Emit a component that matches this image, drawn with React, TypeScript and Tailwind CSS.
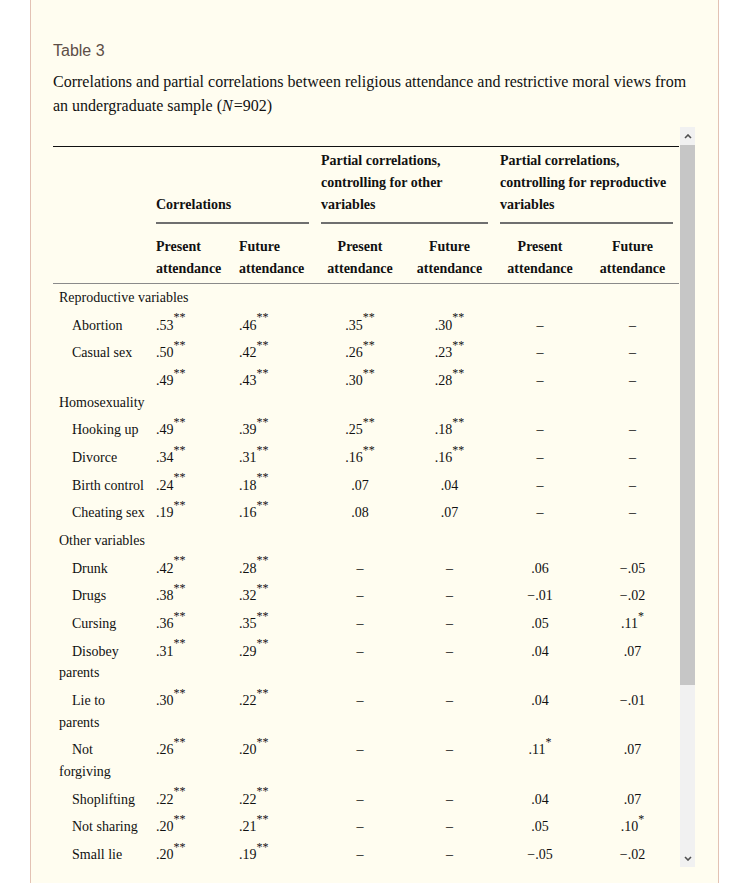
import React from 'react';

/* ────────────────── Data ────────────────── */

type Cell = { n: string; s?: string };
type Row =
  | { kind: 'cat'; label: string }
  | { kind: 'data'; lines: string[]; values: Cell[] };

const d = (n: string, s?: string): Cell => ({ n, s });
const dash = d('–');

const ROWS: Row[] = [
  { kind: 'cat', label: 'Reproductive variables' },
  { kind: 'data', lines: ['Abortion'], values: [d('.53', '**'), d('.46', '**'), d('.35', '**'), d('.30', '**'), dash, dash] },
  { kind: 'data', lines: ['Casual sex'], values: [d('.50', '**'), d('.42', '**'), d('.26', '**'), d('.23', '**'), dash, dash] },
  { kind: 'data', lines: ['', 'Homosexuality'], values: [d('.49', '**'), d('.43', '**'), d('.30', '**'), d('.28', '**'), dash, dash] },
  { kind: 'data', lines: ['Hooking up'], values: [d('.49', '**'), d('.39', '**'), d('.25', '**'), d('.18', '**'), dash, dash] },
  { kind: 'data', lines: ['Divorce'], values: [d('.34', '**'), d('.31', '**'), d('.16', '**'), d('.16', '**'), dash, dash] },
  { kind: 'data', lines: ['Birth control'], values: [d('.24', '**'), d('.18', '**'), d('.07'), d('.04'), dash, dash] },
  { kind: 'data', lines: ['Cheating sex'], values: [d('.19', '**'), d('.16', '**'), d('.08'), d('.07'), dash, dash] },
  { kind: 'cat', label: 'Other variables' },
  { kind: 'data', lines: ['Drunk'], values: [d('.42', '**'), d('.28', '**'), dash, dash, d('.06'), d('−.05')] },
  { kind: 'data', lines: ['Drugs'], values: [d('.38', '**'), d('.32', '**'), dash, dash, d('−.01'), d('−.02')] },
  { kind: 'data', lines: ['Cursing'], values: [d('.36', '**'), d('.35', '**'), dash, dash, d('.05'), d('.11', '*')] },
  { kind: 'data', lines: ['Disobey', 'parents'], values: [d('.31', '**'), d('.29', '**'), dash, dash, d('.04'), d('.07')] },
  { kind: 'data', lines: ['Lie to', 'parents'], values: [d('.30', '**'), d('.22', '**'), dash, dash, d('.04'), d('−.01')] },
  { kind: 'data', lines: ['Not', 'forgiving'], values: [d('.26', '**'), d('.20', '**'), dash, dash, d('.11', '*'), d('.07')] },
  { kind: 'data', lines: ['Shoplifting'], values: [d('.22', '**'), d('.22', '**'), dash, dash, d('.04'), d('.07')] },
  { kind: 'data', lines: ['Not sharing'], values: [d('.20', '**'), d('.21', '**'), dash, dash, d('.05'), d('.10', '*')] },
  { kind: 'data', lines: ['Small lie'], values: [d('.20', '**'), d('.19', '**'), dash, dash, d('−.05'), d('−.02')] },
];

/* ────────────────── Pieces ────────────────── */

function Value({ cell }: { cell: Cell }) {
  return (
    <>
      {cell.n}
      {cell.s && <sup className="top-[-0.7em] text-[12px]">{cell.s}</sup>}
    </>
  );
}

function GroupHead({ lines }: { lines: string[] }) {
  return (
    <th colSpan={2} className="px-[6px] pt-[3px] pb-0 text-left align-bottom font-bold">
      {lines.map((l, i) => (
        <div key={i}>{l}</div>
      ))}
      <div className="mt-[6px] h-[2px] bg-[#6f6f6f]" />
    </th>
  );
}

function SubHead({ word, left }: { word: string; left?: boolean }) {
  return (
    <th className={`px-[6px] pt-[12px] pb-[3px] align-bottom font-bold ${left ? 'text-left' : 'text-center'}`}>
      <div>{word}</div>
      <div>attendance</div>
    </th>
  );
}

function Chevron({ down }: { down?: boolean }) {
  return (
    <svg width="8" height="5" viewBox="0 0 8 5" fill="none">
      <path
        d={down ? 'M1 1l3 3 3-3' : 'M1 4l3-3 3 3'}
        stroke="#505050"
        strokeWidth="1.6"
      />
    </svg>
  );
}

/* ────────────────── Main ────────────────── */

export default function App() {
  return (
    <div className="min-h-screen bg-white">
      <div className="ml-[30px] min-h-screen w-[689px] border-x border-[#e3c2b4] bg-[#fffdf0] pl-[22px] pr-[23px]">
        <h2 className="pt-[41px] font-['Liberation_Sans',Arial,sans-serif] text-[16px] leading-[20px] font-normal text-[#5d4e47]">
          Table 3
        </h2>
        <p className="mt-[9px] font-['Liberation_Serif','Times_New_Roman',serif] text-[16px] leading-[24px] text-[#111]">
          Correlations and partial correlations between religious attendance and restrictive moral views from an
          undergraduate sample (<i className="pr-[1px]">N</i>=902)
        </p>

        <div className="mt-[9px] flex h-[740px]">
          {/* Table viewport */}
          <div className="w-[627px] overflow-hidden pt-[19px]">
            <table className="w-[626px] table-fixed border-collapse font-['Liberation_Serif','Times_New_Roman',serif] text-[14px] text-[#111]">
              <colgroup>
                <col className="w-[97px]" />
                <col className="w-[83px]" />
                <col className="w-[82px]" />
                <col className="w-[90px]" />
                <col className="w-[89px]" />
                <col className="w-[92px]" />
                <col className="w-[93px]" />
              </colgroup>
              <thead className="leading-[22px]">
                <tr className="border-t border-[#111]">
                  <th rowSpan={2} className="border-b border-[#8a8a8a]" />
                  <GroupHead lines={['Correlations']} />
                  <GroupHead lines={['Partial correlations,', 'controlling for other', 'variables']} />
                  <GroupHead lines={['Partial correlations,', 'controlling for reproductive', 'variables']} />
                </tr>
                <tr className="border-b border-[#8a8a8a]">
                  <SubHead word="Present" left />
                  <SubHead word="Future" left />
                  <SubHead word="Present" />
                  <SubHead word="Future" />
                  <SubHead word="Present" />
                  <SubHead word="Future" />
                </tr>
              </thead>
              <tbody className="leading-[21.67px]">
                {ROWS.map((row, i) =>
                  row.kind === 'cat' ? (
                    <tr key={i}>
                      <td colSpan={7} className="whitespace-nowrap px-[6px] py-[3px] align-top">
                        {row.label}
                      </td>
                    </tr>
                  ) : (
                    <tr key={i}>
                      <td className="whitespace-nowrap px-[6px] py-[3px] indent-[13px] align-top">
                        {row.lines.map((l, j) => (
                          <React.Fragment key={j}>
                            {j > 0 && <br />}
                            {l}
                          </React.Fragment>
                        ))}
                      </td>
                      {row.values.map((v, j) => (
                        <td
                          key={j}
                          className={`whitespace-nowrap px-[6px] py-[3px] align-top ${j < 2 ? 'text-left' : 'text-center'}`}
                        >
                          <Value cell={v} />
                        </td>
                      ))}
                    </tr>
                  ),
                )}
              </tbody>
            </table>
          </div>

          {/* Scrollbar */}
          <div className="flex w-[15px] flex-col bg-[#f1f1f1]">
            <div className="flex h-[18px] items-center justify-center">
              <Chevron />
            </div>
            <div className="h-[540px] bg-[#c6c6c6]" />
            <div className="flex-1" />
            <div className="flex h-[18px] items-center justify-center">
              <Chevron down />
            </div>
          </div>
        </div>
      </div>
    </div>
  );
}
